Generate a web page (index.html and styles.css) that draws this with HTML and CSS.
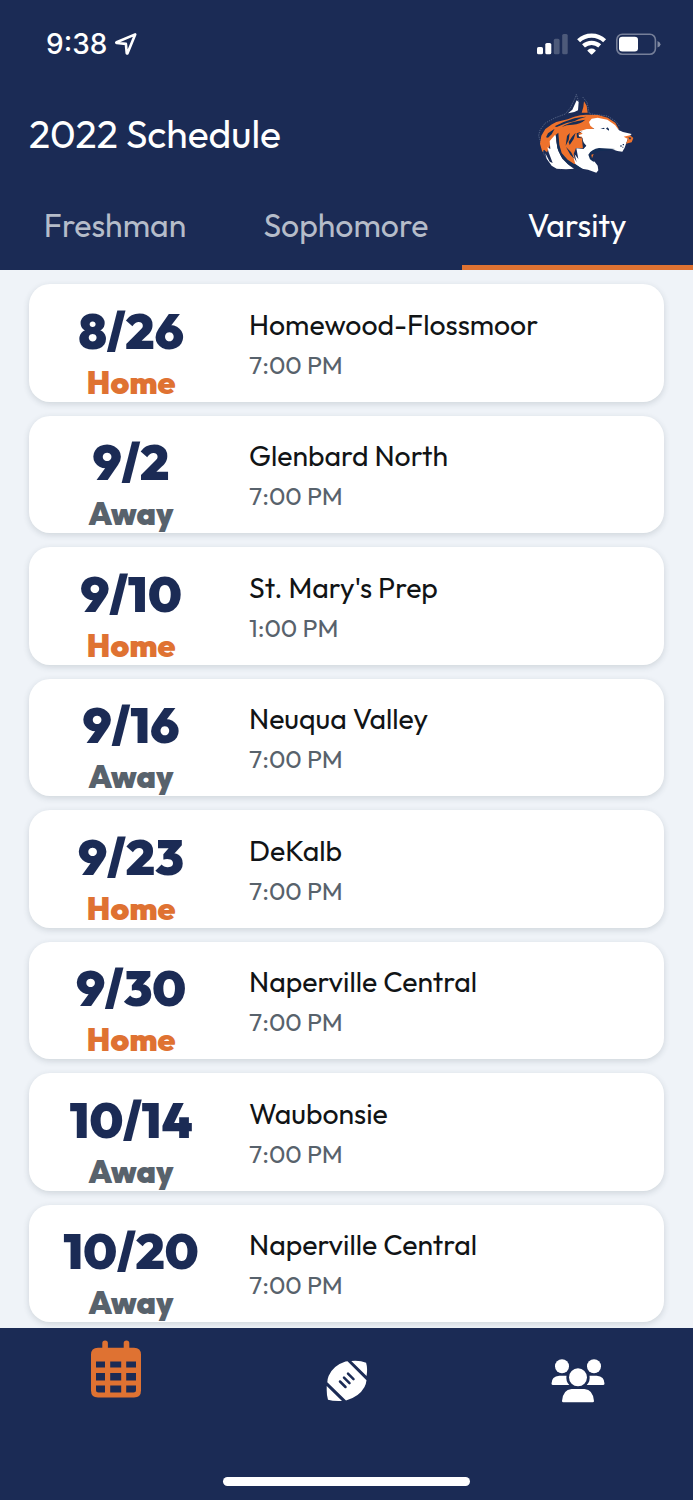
FILE: index.html
```html
<!DOCTYPE html>
<html lang="en">
<head>
    <meta charset="UTF-8">
    <meta name="viewport" content="width=device-width, initial-scale=1.0">
    <title>2022 Schedule</title>
    <link rel="stylesheet" href="styles.css">
</head>
<body>
    <div class="app">
        <header class="header">
            <div class="status-bar">
                <span class="clock">9:38</span>
                <svg class="location" width="22" height="22" viewBox="0 0 22 22">
                    <path d="M20.2 1.4 1.6 9.2q-.7.5.2.8l9.1.9.8 9.1q.3.9.9.1z" />
                </svg>
                <svg class="device-icons" width="126" height="24" viewBox="0 0 126 24">
                    <g fill="#fff">
                        <rect x="1" y="14" width="6" height="7.3" rx="1.6" />
                        <rect x="9.3" y="10" width="6" height="11.3" rx="1.6" />
                        <g opacity=".22">
                            <rect x="17.8" y="5.8" width="5.8" height="15.5" rx="1.6" />
                            <rect x="26.2" y="1" width="5.5" height="20.3" rx="1.6" />
                        </g>
                        <path d="M54.9 21.3q.7.5 1.4 0l3.3-3.3q.5-.6-.2-1.1a6.4 6.4 0 0 0-7.6 0q-.7.5-.2 1.1z" />
                    </g>
                    <g fill="none" stroke="#fff" stroke-width="4.3">
                        <path d="M42.6 7.7a19 19 0 0 1 26 0" />
                        <path d="M47.5 12.9a12.2 12.2 0 0 1 16.2 0" />
                    </g>
                    <rect x="80.8" y="1.2" width="38.6" height="20" rx="5.5" fill="none" stroke="#fff" stroke-opacity=".4" stroke-width="1.6" />
                    <rect x="83" y="3.8" width="19" height="14.8" rx="3.3" fill="#fff" />
                    <path d="M121.5 8q3 1.2 3 3.3t-3 3.3z" fill="#fff" opacity=".45" />
                </svg>
            </div>
            <div class="title-row">
                <h1>2022 Schedule</h1>
                <svg class="logo" width="100" height="82" viewBox="50 25 300 246">
                    <path class="outline" d="M64 170 58 150 62 133 78 112 106 97 138 85 153 66 166 40 171 26 178 48M190 34 203 50 210 84 230 87 265 91 290 108 302 124M66 176 74 206 98 240 124 250" />
                    <path class="orange" d="M62 174 66 150 78 130 98 116 111 109 145 101 165 93 183 89 200 87 236 88 265 96 288 111 300 133 265 105 234 100 224 128 208 136 190 150 191 188 170 187 163 205 170 234 158 236 134 218 119 196 110 160 92 178 83 200 74 192 69 199z" />
                    <!-- ears -->
                    <path class="white" d="M146 83 159 72 172 44 178 49 176 74 165 79z" />
                    <path class="orange" d="M187 81 192 64 194 47 202 60 205 81z" />
                    <!-- mane -->
                    <path class="white" d="M106 149 113 149 110 163 117 196 129 219 148 238 164 249 140 251 112 249 97 240 82 219 78 203 91 228 100 232 88 200 84 185 93 190 91 166z" />
                    <!-- face and jaw -->
                    <path class="white" d="M225 130 213 120 209 109 217 99 235 96 264 102 287 118 299 134 311 139 337 145 327 155 322 169 316 186 309 198 294 196 278 191 238 192 224 198 216 209 215 222 226 228 235 240 237 254 231 261 206 252 188 249 168 235 160 208 172 230 166 206 177 220 171 188 192 190 201 180 192 170 188 153 173 151 190 144 181 137 202 130z" />
                    <path class="navy" d="M106 122Q132 108 165 98 183 93 201 93 180 98 165 107 137 111 112 124zM127 124Q150 108 198 102 183 116 160 117 141 117 127 124z" />
                    <path class="navy" d="M109 148 117 141 120 177 127 202 145 222 169 238 191 250 173 249 145 234 126 213 114 188z" />
                    <path class="navy" d="M143 151 151 142 148 163 139 180zM158 153 169 141 163 160 151 178 148 169zM140 184 155 199 166 221 153 207zM190 137 177 144 179 153 189 157 193 174 199 181 191 190 188 158 173 156 172 143zM86 143 106 129 97 146 86 156 80 155z" />
                    <path class="navy" d="M243 130 254 126 256 130zM260 129 264 125 269 130 269 135zM303 179h4v4h-4zM310 175h4v4h-4zM309 183h3v3h-3z" />
                    <path class="navy" d="M207 207Q217 190 239 187L288 190 271 194 241 196 225 203 218 214 224 230 212 221z" />
                    <path class="orange" d="M313 153 332 149 342 157 337 170 320 174 326 160zM216 207 223 205 218 218z" />
                    <path class="navy" d="M327 155 336 156 332 162z" />
                </svg>
            </div>
            <nav class="tabs">
                <a class="tab">Freshman</a>
                <a class="tab">Sophomore</a>
                <a class="tab active">Varsity</a>
            </nav>
        </header>

        <main class="games">
            <div class="card">
                <div class="when"><div class="date">8/26</div><div class="place home">Home</div></div>
                <div class="info"><div class="team">Homewood-Flossmoor</div><div class="time">7:00 PM</div></div>
            </div>
            <div class="card">
                <div class="when"><div class="date">9/2</div><div class="place away">Away</div></div>
                <div class="info"><div class="team">Glenbard North</div><div class="time">7:00 PM</div></div>
            </div>
            <div class="card">
                <div class="when"><div class="date">9/10</div><div class="place home">Home</div></div>
                <div class="info"><div class="team">St. Mary's Prep</div><div class="time">1:00 PM</div></div>
            </div>
            <div class="card">
                <div class="when"><div class="date">9/16</div><div class="place away">Away</div></div>
                <div class="info"><div class="team">Neuqua Valley</div><div class="time">7:00 PM</div></div>
            </div>
            <div class="card">
                <div class="when"><div class="date">9/23</div><div class="place home">Home</div></div>
                <div class="info"><div class="team">DeKalb</div><div class="time">7:00 PM</div></div>
            </div>
            <div class="card">
                <div class="when"><div class="date">9/30</div><div class="place home">Home</div></div>
                <div class="info"><div class="team">Naperville Central</div><div class="time">7:00 PM</div></div>
            </div>
            <div class="card">
                <div class="when"><div class="date">10/14</div><div class="place away">Away</div></div>
                <div class="info"><div class="team">Waubonsie</div><div class="time">7:00 PM</div></div>
            </div>
            <div class="card">
                <div class="when"><div class="date">10/20</div><div class="place away">Away</div></div>
                <div class="info"><div class="team">Naperville Central</div><div class="time">7:00 PM</div></div>
            </div>
        </main>

        <footer class="footer">
            <nav class="nav">
                <a class="nav-item calendar">
                    <svg width="50" height="58" viewBox="0 0 50 58">
                        <path fill="#df7232" fill-rule="evenodd" d="M11.3 7.7V3.2a2.8 2.8 0 0 1 5.6 0v4.5h15.8V3.2a2.8 2.8 0 0 1 5.6 0v4.5H43q7 0 7 7v35.800q0 7-7 7H7q-7 0-7-7V14.700q0-7 7-7zM5 21.500v6h9v-6zm14.200 0v6h11v-6zm16 0v6H45v-6zM5 33v7.500h9V33zm14.200 0v7.500h11V33zm16 0v7.500H45V33zM5 45.500v4.500q0 2.500 2.500 2.500H14v-7zm14.200 0v7h11v-7zm16 0v7h7.300q2.500 0 2.500-2.500v-4.500z" />
                    </svg>
                </a>
                <a class="nav-item">
                    <svg width="42" height="42" viewBox="0 0 42 42">
                        <path fill="#fff" d="M19.5 1.500Q7 5.500 2.600 16q-1.200 3-1.300 6.300L20 40.400Q33 37 38.500 27q1.600-3 2-6.800L21.500 1.300zM25.300 1 40.600 16q1.200-7.500-.5-13.200Q34 .2 25.300 1zM.7 26v4q0 6 1.300 9.700 5 1.700 14 1.300z" />
                        <path stroke="#1b2b55" stroke-width="2.5" stroke-linecap="round" d="m14 21.500 5.500 5.500M18 17.600l5.500 5.500M22 13.700l5.500 5.500" />
                    </svg>
                </a>
                <a class="nav-item">
                    <svg width="54" height="44" viewBox="0 0 54 44">
                        <g fill="#fff">
                            <circle cx="11" cy="7.2" r="7" />
                            <circle cx="43" cy="7.2" r="7" />
                            <circle cx="27" cy="18.3" r="9" />
                            <path d="M8.300 16.700H15.500Q14.500 22 18.300 26H2Q.5 26 .5 24.500.5 17.500 8.300 16.700zM38.500 16.700h7.200q7.800.8 7.800 7.800 0 1.500-1.500 1.500H35.700q3.800-4 2.800-9.300zM20.500 30h13Q42 30.500 43 42q0 1.300-1.300 1.300H12.300Q11 43.300 11 42 12 30.500 20.500 30z" />
                        </g>
                    </svg>
                </a>
            </nav>
            <div class="home-indicator"></div>
        </footer>
    </div>
</body>
</html>
```
FILE: styles.css
```css
* {
    box-sizing: border-box;
}
body {
    margin: 0;
    font-family: Outfit, Lato, sans-serif;
    background-color: #eff3f8;
    color: #111416;
}
.app {
    height: 1500px;
    display: flex;
    flex-direction: column;
    overflow: hidden;
}
.header {
    height: 270px;
    flex: none;
    background-color: #1b2b55;
    color: #ffffff;
}
.status-bar {
    height: 88px;
    padding: 0 24px 0 46px;
    display: flex;
    align-items: center;
}
.clock {
    font-family: Inter, sans-serif;
    font-size: 28px;
    font-weight: 500;
    line-height: 34px;
}
.location {
    margin-left: 8px;
    fill: none;
    stroke: #ffffff;
    stroke-width: 2.6;
    stroke-linejoin: round;
}
.device-icons {
    margin: 2px 7px 0 auto;
}
.title-row {
    height: 96px;
    padding: 0 57px 0 29px;
    display: flex;
    align-items: center;
    justify-content: space-between;
}
h1 {
    margin: 0 0 4px;
    font-size: 39px;
    font-weight: 400;
    line-height: 48px;
}
.logo {
    margin-bottom: 2px;
}
.logo .orange { fill: #ee722c; }
.logo .white { fill: #ffffff; }
.logo .navy { fill: #142d56; }
.logo .outline {
    fill: none;
    stroke: #8795ad;
    stroke-width: 1.5;
    stroke-dasharray: 4 3;
}
.tabs {
    height: 86px;
    display: grid;
    grid-template-columns: repeat(3, 1fr);
}
.tab {
    padding: 21px 1px 0 0;
    border-bottom: 5px solid transparent;
    font-size: 32px;
    line-height: 40px;
    text-align: center;
    color: #b5bcc9;
}
.tab.active {
    color: #ffffff;
    border-color: #df7232;
}
.games {
    flex: 1;
    min-height: 0;
    padding: 14px 29px 0 28.5px;
    display: flex;
    flex-direction: column;
    gap: 14px;
    overflow: hidden;
}
.card {
    height: 117.5px;
    flex: none;
    display: flex;
    background-color: #ffffff;
    border-radius: 21px;
    box-shadow: 0 2px 6px rgba(40, 55, 70, 0.16);
}
.when {
    width: 205px;
    flex: none;
    padding-top: 16.5px;
    text-align: center;
    font-weight: 900;
}
.date {
    font-size: 50px;
    line-height: 60px;
    color: #1b2b55;
}
.place {
    font-size: 32px;
    line-height: 42px;
}
.home { color: #df7232; }
.away { color: #58626c; }
.info {
    padding: 21.5px 0 0 15.5px;
}
.team {
    font-size: 28.4px;
    line-height: 38px;
}
.time {
    font-size: 25px;
    line-height: 42px;
    color: #58626c;
}
.footer {
    height: 172.5px;
    flex: none;
    display: flex;
    flex-direction: column;
    justify-content: space-between;
    align-items: center;
    background-color: #1b2b55;
}
.nav {
    width: 100%;
    height: 106px;
    display: grid;
    grid-template-columns: repeat(3, 1fr);
}
.nav-item {
    display: flex;
    align-items: center;
    justify-content: center;
}
.nav-item.calendar {
    padding-bottom: 24px;
}
.home-indicator {
    width: 247px;
    height: 9px;
    margin-bottom: 14.5px;
    border-radius: 5px;
    background-color: #ffffff;
}
```
